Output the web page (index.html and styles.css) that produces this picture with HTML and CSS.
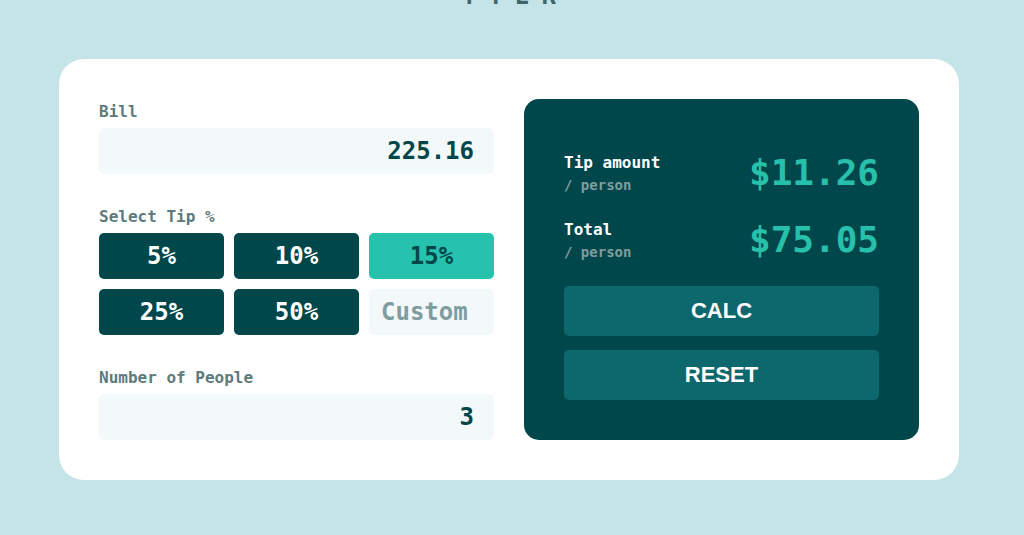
FILE: index.html
```html
<!DOCTYPE html>
<html lang="en">
<head>
<meta charset="utf-8">
<title>Splitter</title>
<link rel="stylesheet" href="styles.css">
</head>
<body>
<main class="page">
  <h1 class="logo">SPLI<br>TTER</h1>
  <section class="card">
    <div class="inputs">
      <div class="field">
        <label class="label" for="bill">Bill</label>
        <input class="text-input" id="bill" type="text" value="225.16">
      </div>
      <div class="field">
        <span class="label">Select Tip %</span>
        <div class="tips">
          <button class="tip">5%</button>
          <button class="tip">10%</button>
          <button class="tip active">15%</button>
          <button class="tip">25%</button>
          <button class="tip">50%</button>
          <input class="custom" type="text" placeholder="Custom">
        </div>
      </div>
      <div class="field">
        <label class="label" for="people">Number of People</label>
        <input class="text-input" id="people" type="text" value="3">
      </div>
    </div>
    <div class="result">
      <div class="row">
        <div class="row-label">
          <span class="row-title">Tip amount</span>
          <span class="row-sub">/ person</span>
        </div>
        <span class="amount">$11.26</span>
      </div>
      <div class="row">
        <div class="row-label">
          <span class="row-title">Total</span>
          <span class="row-sub">/ person</span>
        </div>
        <span class="amount">$75.05</span>
      </div>
      <div class="actions">
        <button class="action">CALC</button>
        <button class="action">RESET</button>
      </div>
    </div>
  </section>
</main>
</body>
</html>
```

FILE: styles.css
```css
* { box-sizing: border-box; }

html, body {
  margin: 0;
  padding: 0;
  background: #c5e4e7;
  height: 100%;
  overflow: hidden;
}

body {
  font-family: "DejaVu Sans Mono", "Liberation Mono", monospace;
  font-weight: bold;
  color: #00474b;
}

.page {
  display: flex;
  flex-direction: column;
  align-items: center;
  padding-right: 6px;
}

.logo {
  margin: -46px 0 0 0;
  padding-left: 12px;
  font-size: 24px;
  line-height: 28px;
  letter-spacing: 12px;
  text-align: center;
  color: #3d6666;
}

.card {
  margin-top: 49px;
  width: 900px;
  background: #fff;
  border-radius: 25px;
  padding: 40px;
  display: grid;
  grid-template-columns: 395px 395px;
  column-gap: 30px;
}

.inputs {
  display: flex;
  flex-direction: column;
  gap: 30px;
}

.field {
  display: flex;
  flex-direction: column;
  gap: 5px;
}

.label {
  font-size: 16px;
  line-height: 24px;
  padding-top: 1px;
  margin-bottom: -1px;
  color: #5e7a7d;
}

.text-input,
.custom {
  font-family: inherit;
  font-weight: bold;
  font-size: 24px;
  color: #00474b;
  background: #f3f9fa;
  border: none;
  border-radius: 5px;
  height: 46px;
  width: 100%;
  text-align: right;
  padding: 0 20px;
  outline: none;
}

.tips {
  display: grid;
  grid-template-columns: repeat(3, 1fr);
  gap: 10px;
}

.tip {
  font-family: inherit;
  font-weight: bold;
  font-size: 24px;
  height: 46px;
  border: none;
  border-radius: 5px;
  background: #00474b;
  color: #fff;
  padding: 0;
}

.tip.active {
  background: #26c2ae;
  color: #00474b;
}

.custom {
  text-align: left;
  padding: 0 12px;
}

.custom::placeholder {
  color: #7f9c9f;
  opacity: 1;
}

.result {
  background: #00474b;
  border-radius: 15px;
  padding: 52px 40px 40px;
  display: flex;
  flex-direction: column;
}

.row {
  display: flex;
  align-items: center;
  justify-content: space-between;
}

.row + .row {
  margin-top: 23px;
}

.row-label {
  display: flex;
  flex-direction: column;
}

.row-title {
  font-size: 16px;
  line-height: 24px;
  color: #fff;
}

.row-sub {
  font-size: 14px;
  line-height: 20px;
  color: #7f9d9f;
}

.amount {
  font-size: 36px;
  line-height: 44px;
  color: #26c0ab;
}

.actions {
  margin-top: 24px;
  display: flex;
  flex-direction: column;
  gap: 14px;
}

.action {
  font-family: "Liberation Sans", Arial, sans-serif;
  font-weight: bold;
  font-size: 22px;
  height: 50px;
  border: none;
  border-radius: 5px;
  background: #0d686d;
  color: #fff;
  padding: 0;
}
```
